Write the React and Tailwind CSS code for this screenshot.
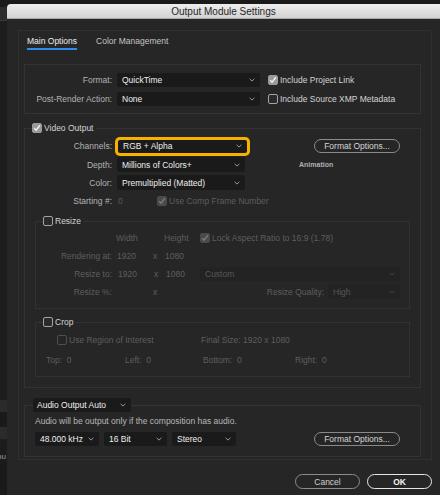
import React from 'react';

const font = "font-['Liberation_Sans',Arial,sans-serif]";

const Chevron = ({ className = '' }) => (
  <svg width="6" height="4" viewBox="0 0 6 4" className={className}>
    <path d="M0.6 0.8 L3 3.1 L5.4 0.8" fill="none" stroke="currentColor" strokeWidth="0.9" />
  </svg>
);

const Select = ({ value, className = '', disabled }) => (
  <div
    className={`flex items-center justify-between rounded-[2px] pl-[5px] pr-[5px] ${
      disabled ? 'bg-[#232323] text-[#575757]' : 'bg-[#1a1a1a] text-[#eeeeee]'
    } ${className}`}
  >
    <span className="whitespace-nowrap">{value}</span>
    <Chevron className={disabled ? 'text-[#474747]' : 'text-[#a6a6a6]'} />
  </div>
);

const Check = ({ checked, disabled }) => {
  let box = 'border-[#a3a3a3] bg-[#2a2a2a]';
  if (checked && !disabled) box = 'border-[#9a9a9a] bg-[#9a9a9a]';
  if (checked && disabled) box = 'border-[#4a4a4a] bg-[#4a4a4a]';
  if (!checked && disabled) box = 'border-[#4e4e4e] bg-transparent';
  return (
    <span className={`flex h-[10px] w-[10px] shrink-0 items-center justify-center rounded-[2px] border ${box}`}>
      {checked && (
        <svg width="8" height="8" viewBox="0 0 8 8">
          <path
            d="M1.2 4.3 L3.1 6.2 L6.9 1.3"
            fill="none"
            stroke={disabled ? '#7a7a7a' : '#f2f2f2'}
            strokeWidth="1.4"
          />
        </svg>
      )}
    </span>
  );
};

const Pill = ({ children, className = '' }) => (
  <div className={`flex items-center justify-center rounded-full border ${className}`}>{children}</div>
);

const Label = ({ children, w, className = '' }) => (
  <span className={`shrink-0 text-right whitespace-nowrap text-[#b3b3b3] ${className}`} style={{ width: w }}>
    {children}
  </span>
);

export default function App() {
  return (
    <div className={`${font} flex h-[495px] w-[440px] overflow-hidden bg-[#1a1a1a] text-[8.5px] leading-[10px]`}>
      {/* background app strip */}
      <div className="flex w-[7px] shrink-0 flex-col pt-[7px]">
        <div className="h-[13px] bg-[#2c2c2c]" />
        <div className="h-px bg-[#3a3a3a]" />
        <div className="h-[379px] bg-[#1d1d1d]" />
        <div className="h-[12px] bg-[#2b2b2b]" />
        <div className="h-[15px] bg-[#1a1a1a]" />
        <div className="h-[12px] bg-[#2b2b2b]" />
        <div className="flex h-[23px] items-end overflow-hidden bg-[#1c1c1c] text-[8px] text-[#9a9a9a]">
          <span className="-ml-[3px]">pu</span>
        </div>
      </div>

      {/* dialog */}
      <div className="mt-[4px] flex flex-1 flex-col overflow-hidden rounded-tl-[4px] bg-[#262626]">
        <div className="flex h-[15px] shrink-0 items-center justify-center border-b border-[#a9a9a9] bg-gradient-to-b from-[#ededed] to-[#d2d2d2] pt-[1px] text-[10px] text-[#262626]">
          Output Module Settings
        </div>

        <div className="ml-[11px] mt-[11px] w-[414px] border border-[#303030] pb-[2px]">
          {/* tabs */}
          <div className="flex h-[33px] items-start gap-[19px] pl-[8px] pt-[5px]">
            <div className="flex flex-col">
              <span className="text-[#ececec]">Main Options</span>
              <span className="mt-[2px] h-[2px] bg-[#2f8cec]" />
            </div>
            <span className="text-[#c4c4c4]">Color Management</span>
          </div>

          {/* format panel */}
          <div className="ml-[5px] flex w-[397px] flex-col gap-[5px] border border-[#333333] pb-[7px] pt-[8px]">
            <div className="flex h-[14px] items-center">
              <Label w={87}>Format:</Label>
              <Select value="QuickTime" className="ml-[5px] h-[14px] w-[143px]" />
              <span className="ml-[8px] flex items-center gap-[2px] text-[#d4d4d4]">
                <Check checked />
                Include Project Link
              </span>
            </div>
            <div className="flex h-[14px] items-center">
              <Label w={87}>Post-Render Action:</Label>
              <Select value="None" className="ml-[5px] h-[14px] w-[143px]" />
              <span className="ml-[8px] flex items-center gap-[2px] text-[#d4d4d4]">
                <Check />
                Include Source XMP Metadata
              </span>
            </div>
          </div>

          {/* video output */}
          <fieldset className="ml-[5px] mt-[9px] w-[397px] border border-[#333333] pb-[10px]">
            <legend className="ml-[7px] pr-[3px]">
              <span className="flex items-center gap-[2px] text-[#d4d4d4]">
                <Check checked />
                Video Output
              </span>
            </legend>

            <div className="flex flex-col gap-[3px] pt-[5px]">
              <div className="flex h-[16px] items-center">
                <Label w={87}>Channels:</Label>
                <Select
                  value="RGB + Alpha"
                  className="ml-[6px] h-[13px] w-[129px] ring-[3px] ring-[#f5b300]"
                />
                <Pill className="ml-[67px] h-[14px] w-[86px] border-[#8a8a8a] text-[#d6d6d6]">Format Options...</Pill>
              </div>
              <div className="flex h-[15px] items-center">
                <Label w={87}>Depth:</Label>
                <Select value="Millions of Colors+" className="ml-[5px] h-[15px] w-[128px]" />
                <span className="ml-[54px] text-[7px] font-bold text-[#b0b0b0]">Animation</span>
              </div>
              <div className="flex h-[15px] items-center">
                <Label w={87}>Color:</Label>
                <Select value="Premultiplied (Matted)" className="ml-[5px] h-[15px] w-[128px]" />
              </div>
              <div className="flex h-[15px] items-center">
                <Label w={87}>Starting #:</Label>
                <span className="ml-[6px] w-[39px] text-[#5c5c5c]">0</span>
                <span className="flex items-center gap-[2px] text-[#5e5e5e]">
                  <Check checked disabled />
                  Use Comp Frame Number
                </span>
              </div>
            </div>

            {/* resize */}
            <fieldset className="ml-[10px] mt-[8px] w-[375px] border border-[#323232] pb-[9px]">
              <legend className="ml-[7px] pr-[3px]">
                <span className="flex items-center gap-[2px] text-[#d4d4d4]">
                  <Check />
                  Resize
                </span>
              </legend>
              <div className="flex flex-col gap-[4px] pt-[5px] text-[#5e5e5e]">
                <div className="flex h-[14px] items-center">
                  <span className="ml-[80px] w-[48px]">Width</span>
                  <span className="w-[36px]">Height</span>
                  <span className="flex items-center gap-[2px]">
                    <Check checked disabled />
                    Lock Aspect Ratio to 16:9 (1.78)
                  </span>
                </div>
                <div className="flex h-[14px] items-center">
                  <Label w={76} className="!text-[#5e5e5e]">Rendering at:</Label>
                  <span className="ml-[5px] w-[36px]">1920</span>
                  <span className="w-[12px]">x</span>
                  <span className="w-[35px]">1080</span>
                </div>
                <div className="flex h-[14px] items-center">
                  <Label w={76} className="!text-[#5e5e5e]">Resize to:</Label>
                  <span className="ml-[6px] w-[36px]">1920</span>
                  <span className="w-[12px]">x</span>
                  <span className="w-[34px]">1080</span>
                  <Select value="Custom" disabled className="h-[14px] w-[200px]" />
                </div>
                <div className="flex h-[14px] items-center">
                  <Label w={76} className="!text-[#5e5e5e]">Resize %:</Label>
                  <span className="ml-[41px] w-[12px]">x</span>
                  <span className="w-[159px] text-right">Resize Quality:</span>
                  <Select value="High" disabled className="ml-[4px] h-[14px] w-[72px]" />
                </div>
              </div>
            </fieldset>

            {/* crop */}
            <fieldset className="ml-[10px] mt-[8px] w-[375px] border border-[#323232] pb-[9px]">
              <legend className="ml-[7px] pr-[3px]">
                <span className="flex items-center gap-[2px] text-[#d4d4d4]">
                  <Check />
                  Crop
                </span>
              </legend>
              <div className="flex flex-col gap-[6px] pt-[6px] text-[#5e5e5e]">
                <div className="flex h-[14px] items-center">
                  <span className="ml-[21px] flex w-[144px] items-center gap-[2px]">
                    <Check disabled />
                    Use Region of Interest
                  </span>
                  <span>Final Size: 1920 x 1080</span>
                </div>
                <div className="flex h-[14px] items-center">
                  <span className="ml-[10px] w-[79px]">Top:&nbsp;&nbsp;0</span>
                  <span className="w-[78px]">Left:&nbsp;&nbsp;0</span>
                  <span className="w-[92px]">Bottom:&nbsp;&nbsp;0</span>
                  <span>Right:&nbsp;&nbsp;0</span>
                </div>
              </div>
            </fieldset>
          </fieldset>

          {/* audio */}
          <fieldset className="ml-[5px] mt-[10px] w-[397px] border border-[#333333] pb-[10px]">
            <legend className="ml-[8px]">
              <Select value="Audio Output Auto" className="h-[14px] w-[98px] !pl-[4px]" />
            </legend>
            <div className="flex flex-col pl-[10px] pt-[3px]">
              <span className="h-[12px] leading-[12px] text-[#b8b8b8]">
                Audio will be output only if the composition has audio.
              </span>
              <div className="mt-[5px] flex h-[14px] items-center">
                <Select value="48.000 kHz" className="h-[14px] w-[64px]" />
                <Select value="16 Bit" className="ml-[5px] h-[14px] w-[63px]" />
                <Select value="Stereo" className="ml-[5px] h-[14px] w-[64px]" />
                <Pill className="ml-[78px] h-[14px] w-[86px] border-[#8a8a8a] text-[#d6d6d6]">Format Options...</Pill>
              </div>
            </div>
          </fieldset>
        </div>

        {/* buttons */}
        <div className="mt-[14px] flex justify-end gap-[7px] pr-[8px]">
          <Pill className="h-[15px] w-[65px] border-[#8c8c8c] text-[#d0d0d0]">Cancel</Pill>
          <Pill className="h-[15px] w-[65px] border-[#e6e6e6] font-bold text-[#f4f4f4]">OK</Pill>
        </div>
      </div>
    </div>
  );
}
